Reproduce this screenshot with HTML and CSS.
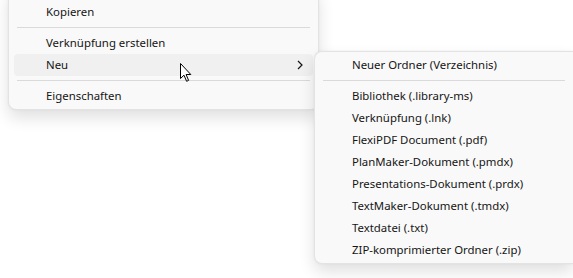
FILE: index.html
```html
<!DOCTYPE html>
<html lang="de">
<head>
	<meta charset="utf-8">
	<title>Kontextmenü – Neu</title>
	<link rel="stylesheet" href="styles.css">
</head>
<body>
	<div class="desk">
		<!-- Hauptmenü -->
		<ul class="menu main">
			<li class="item">Kopieren</li>
			<li class="sep"></li>
			<li class="item">Verknüpfung erstellen</li>
			<li class="item hover">Neu
				<svg class="chev" viewBox="0 0 6 10" width="6" height="10"><path d="M1 1 L5 5 L1 9" /></svg>
			</li>
			<li class="sep"></li>
			<li class="item">Eigenschaften</li>
		</ul>

		<!-- Untermenü "Neu" -->
		<ul class="menu sub">
			<li class="item">Neuer Ordner (Verzeichnis)</li>
			<li class="sep"></li>
			<li class="item">Bibliothek (.library-ms)</li>
			<li class="item">Verknüpfung (.lnk)</li>
			<li class="item">FlexiPDF Document (.pdf)</li>
			<li class="item">PlanMaker-Dokument (.pmdx)</li>
			<li class="item">Presentations-Dokument (.prdx)</li>
			<li class="item">TextMaker-Dokument (.tmdx)</li>
			<li class="item">Textdatei (.txt)</li>
			<li class="item">ZIP-komprimierter Ordner (.zip)</li>
		</ul>

		<!-- Mauszeiger -->
		<svg class="cursor" viewBox="0 0 12 20" width="12" height="20">
			<path d="M0.5 0.5 L0.5 15.5 L4 12.2 L6.6 18.3 L8.6 17.4 L6.1 11.5 L10.8 11.5 Z" />
		</svg>
	</div>
</body>
</html>
```

FILE: styles.css
```css
html, body { margin: 0; background: #fff; }
body {
	font-family: "Noto Sans", "Open Sans", sans-serif;
	font-size: 11.4px;
	color: #151515;
	overflow: hidden;
}
.desk { position: relative; display: flow-root; width: 573px; height: 278px; }

.menu {
	list-style: none;
	margin: 0;
	padding: 2px 5px;
	background: #f9f9f9;
	border: 1px solid #e3e3e3;
	border-radius: 8px;
	box-shadow: 0 8px 16px rgba(0, 0, 0, 0.12), 0 0 3px rgba(0, 0, 0, 0.05);
	box-sizing: border-box;
}
.main {
	width: 311px;
	margin: -13px 0 0 8px;
	padding-top: 13px;
}
/* Untermenü liegt über dem Hauptmenü */
.sub {
	position: absolute;
	left: 314px;
	top: 51px;
	width: 259px;
	border-right: none;
	border-radius: 8px 0 0 8px;
}

.item {
	height: 22px;
	line-height: 22px;
	padding: 0 8px 0 32px;
	border-radius: 4px;
	display: flex;
	align-items: center;
	justify-content: space-between;
	white-space: nowrap;
}
.hover { background: #f0f0f0; }
.chev { fill: none; stroke: #151515; stroke-width: 1.2; margin-right: 2px; }

.sep {
	height: 1px;
	margin: 4px 3px;
	background: #dadada;
}

.cursor {
	position: absolute;
	left: 180px;
	top: 63px;
	fill: #fff;
	stroke: #000;
	stroke-width: 1;
	stroke-linejoin: miter;
}
```
